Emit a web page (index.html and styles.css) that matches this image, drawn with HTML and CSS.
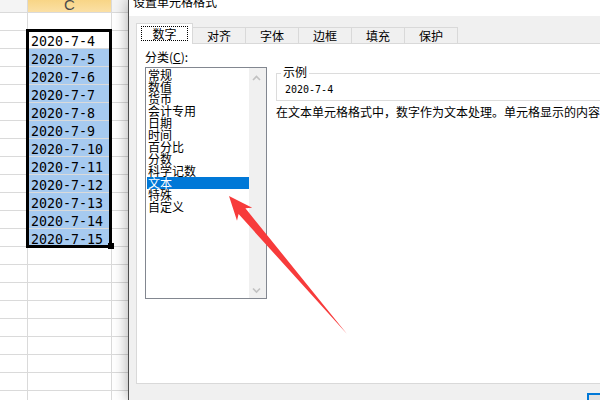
FILE: index.html
```html
<!DOCTYPE html>
<html lang="zh-CN">
<head>
<meta charset="utf-8">
<title>设置单元格格式</title>
<link rel="stylesheet" href="styles.css">
</head>
<body>
<div class="sheet">
  <div class="cell hd"></div><div class="cell hd hd-c">C</div><div class="cell hd d"></div>
  <div class="cell"></div><div class="cell"></div><div class="cell d"></div>
  <div class="cell"></div><div class="cell val">2020-7-4</div><div class="cell d"></div>
  <div class="cell"></div><div class="cell val sel">2020-7-5</div><div class="cell d"></div>
  <div class="cell"></div><div class="cell val sel">2020-7-6</div><div class="cell d"></div>
  <div class="cell"></div><div class="cell val sel">2020-7-7</div><div class="cell d"></div>
  <div class="cell"></div><div class="cell val sel">2020-7-8</div><div class="cell d"></div>
  <div class="cell"></div><div class="cell val sel">2020-7-9</div><div class="cell d"></div>
  <div class="cell"></div><div class="cell val sel">2020-7-10</div><div class="cell d"></div>
  <div class="cell"></div><div class="cell val sel">2020-7-11</div><div class="cell d"></div>
  <div class="cell"></div><div class="cell val sel">2020-7-12</div><div class="cell d"></div>
  <div class="cell"></div><div class="cell val sel">2020-7-13</div><div class="cell d"></div>
  <div class="cell"></div><div class="cell val sel">2020-7-14</div><div class="cell d"></div>
  <div class="cell"></div><div class="cell val sel">2020-7-15</div><div class="cell d"></div>
  <div class="cell"></div><div class="cell"></div><div class="cell d"></div>
  <div class="cell"></div><div class="cell"></div><div class="cell d"></div>
  <div class="cell"></div><div class="cell"></div><div class="cell d"></div>
  <div class="cell"></div><div class="cell"></div><div class="cell d"></div>
  <div class="cell"></div><div class="cell"></div><div class="cell d"></div>
  <div class="cell"></div><div class="cell"></div><div class="cell d"></div>
  <div class="cell"></div><div class="cell"></div><div class="cell d"></div>
  <div class="cell"></div><div class="cell"></div><div class="cell d"></div>
  <div class="cell"></div><div class="cell"></div><div class="cell d"></div>
  <div class="selection"></div>
  <div class="fill-handle"></div>
</div>

<div class="dialog">
  <div class="titlebar"><div class="title">设置单元格格式</div></div>
  <div class="client">
    <div class="tabs">
      <div class="tab active"><div class="focus">数字</div></div>
      <div class="tab">对齐</div>
      <div class="tab">字体</div>
      <div class="tab">边框</div>
      <div class="tab">填充</div>
      <div class="tab">保护</div>
    </div>
    <div class="panel">
      <div class="col-left">
        <div class="label">分类(<u>C</u>):</div>
        <div class="listbox">
          <ul class="items">
            <li>常规</li>
            <li>数值</li>
            <li>货币</li>
            <li>会计专用</li>
            <li>日期</li>
            <li>时间</li>
            <li>百分比</li>
            <li>分数</li>
            <li>科学记数</li>
            <li class="on">文本</li>
            <li>特殊</li>
            <li>自定义</li>
          </ul>
          <div class="scrollbar">
            <svg class="chev" width="17" height="17" viewBox="0 0 17 17"><polyline points="4,12 7.5,8.5 11,12" fill="none" stroke="#c2c2c2" stroke-width="1.6"/></svg>
            <svg class="chev" width="17" height="17" viewBox="0 0 17 17"><polyline points="4,7.5 7.5,11 11,7.5" fill="none" stroke="#c2c2c2" stroke-width="1.6"/></svg>
          </div>
        </div>
      </div>
      <div class="col-right">
        <div class="sample">
          <span class="legend">示例</span>
          <div class="sample-value">2020-7-4</div>
        </div>
        <div class="desc">在文本单元格格式中，数字作为文本处理。单元格显示的内容与输入的内容完全一致。</div>
      </div>
    </div>
    <div class="footer">
      <button class="btn ok">确定</button>
      <button class="btn">取消</button>
    </div>
  </div>
</div>

<svg class="arrow" width="600" height="400" viewBox="0 0 600 400">
  <polygon points="229,196 252.2,207.7 245.4,208.3 347,334 238.6,214.1 237,220.7" fill="#f73b3b"/>
</svg>
</body>
</html>
```

FILE: styles.css
```css
body {
  margin: 0;
  width: 600px;
  height: 400px;
  overflow: hidden;
  display: flex;
  position: relative;
  background: #fff;
  font-family: "Noto Sans CJK SC", sans-serif;
  font-size: 12px;
  color: #000;
}

/* ---------- spreadsheet ---------- */
.sheet {
  position: relative;
  flex: none;
  width: 128px;
  display: grid;
  grid-template-columns: 28px 84px 16px;
  grid-template-rows: 13px;
  grid-auto-rows: 18px;
  align-content: start;
  overflow: hidden;
  background: #fff;
}
.cell {
  box-sizing: border-box;
  border-right: 1px solid #dadada;
  border-bottom: 1px solid #dadada;
  overflow: hidden;
}
.cell.d { border-right: 0; }
.hd { background: #f4f4f4; }
.hd-c {
  background: linear-gradient(#f8d586, #fbe0a5);
  text-align: center;
  font-family: "Liberation Sans", sans-serif;
  font-size: 15px;
  line-height: 10px;
  color: #4a4a4a;
}
.val {
  font-family: "DejaVu Sans Mono", monospace;
  font-size: 13.3px;
  line-height: 21px;
  padding-left: 3px;
  white-space: nowrap;
}
.sel { background: #a6caf0; }
.selection {
  position: absolute;
  left: 26px;
  top: 29px;
  width: 86px;
  height: 219px;
  box-sizing: border-box;
  border: 3px solid #000;
}
.fill-handle {
  position: absolute;
  left: 108px;
  top: 243px;
  width: 6px;
  height: 6px;
  background: #000;
}

/* ---------- dialog ---------- */
.dialog {
  position: relative;
  flex: none;
  width: 472px;
  height: 400px;
  box-sizing: border-box;
  border-left: 1px solid #4d4d4d;
  background: #f0f0f0;
  box-shadow: 0 0 14px rgba(0, 0, 0, 0.35);
  overflow: hidden;
}
.titlebar {
  display: flex;
  align-items: flex-start;
  height: 16px;
  padding-left: 4px;
  background: #fff;
  overflow: hidden;
}
.title {
  line-height: 12px;
  margin-top: -4px;
  white-space: nowrap;
}
.client {
  padding: 7px 0 0 7px;
}
.tabs {
  display: flex;
  align-items: flex-end;
  height: 20px;
}
.tab {
  box-sizing: border-box;
  flex: none;
  width: 53px;
  height: 16px;
  border-top: 1px solid #d9d9d9;
  border-right: 1px solid #d9d9d9;
  text-align: center;
  line-height: 15px;
  white-space: nowrap;
}
.tab.active {
  position: relative;
  z-index: 1;
  width: 57px;
  height: 21px;
  border-left: 1px solid #d9d9d9;
  background: #fff;
  margin-bottom: -1px;
}
.focus {
  box-sizing: border-box;
  width: 47px;
  height: 15px;
  margin: 2px 0 0 4px;
  border: 1px dotted #000;
  line-height: 13px;
}
.panel {
  box-sizing: border-box;
  width: 607px;
  height: 341px;
  display: flex;
  background: #fff;
  border: 1px solid #d9d9d9;
}
.col-left {
  flex: none;
  padding-left: 8px;
}
.label {
  margin-top: 6px;
  line-height: 14px;
  white-space: nowrap;
}
.listbox {
  box-sizing: border-box;
  margin-top: 3px;
  width: 122px;
  height: 232px;
  border: 1px solid #828790;
  display: flex;
}
.items {
  list-style: none;
  margin: 0;
  box-sizing: border-box;
  width: 103px;
  padding: 1px 0 0 1px;
}
.items li {
  height: 12px;
  line-height: 12px;
  padding-left: 1px;
  white-space: nowrap;
}
.items li.on {
  background: #0078d7;
  color: #fff;
}
.scrollbar {
  width: 17px;
  background: #f0f0f0;
  display: flex;
  flex-direction: column;
  justify-content: space-between;
}
.chev { display: block; }

.col-right {
  flex: 1;
  min-width: 0;
  margin-left: 9px;
  margin-right: 8px;
}
.sample {
  margin-top: 29px;
  border: 1px solid #dcdcdc;
  padding-bottom: 4px;
}
.legend {
  display: block;
  width: max-content;
  margin: -8px 0 0 4px;
  padding: 0 2px;
  background: #fff;
  line-height: 12px;
}
.sample-value {
  margin: 6px 0 0 8px;
  font-family: "DejaVu Sans Mono", monospace;
  font-size: 10px;
  line-height: 12px;
}
.desc {
  margin-top: 4px;
  line-height: 14px;
  white-space: nowrap;
}
.footer {
  display: flex;
  justify-content: flex-end;
  gap: 6px;
  width: 607px;
  padding-top: 9px;
}
.btn {
  flex: none;
  width: 75px;
  height: 23px;
  padding: 0;
  border: 1px solid #adadad;
  background: #e1e1e1;
  font-family: "Noto Sans CJK SC", sans-serif;
  font-size: 12px;
}
.btn.ok { border: 2px solid #0078d7; }

/* ---------- annotation arrow ---------- */
.arrow {
  position: absolute;
  left: 0;
  top: 0;
  pointer-events: none;
}
```
